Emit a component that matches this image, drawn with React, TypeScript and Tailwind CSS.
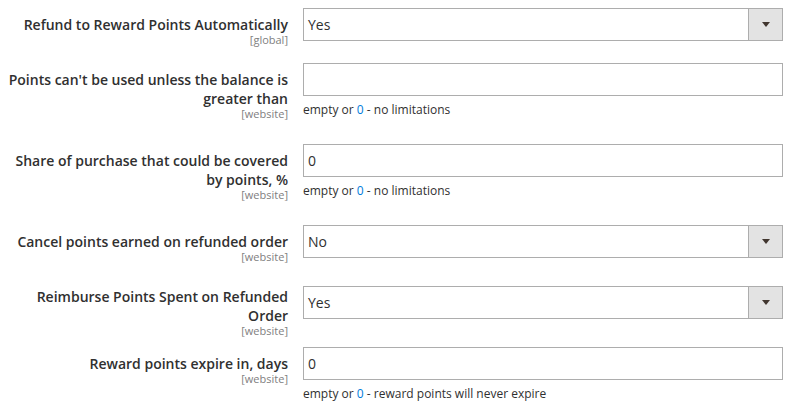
const rows = [
  {
    label: ["Refund to Reward Points Automatically"],
    scope: "[global]",
    type: "select",
    value: "Yes",
    h: "h-[55px]",
    pt: "pt-[7px]",
  },
  {
    label: ["Points can't be used unless the balance is", "greater than"],
    scope: "[website]",
    type: "input",
    value: "",
    note: "no limitations",
    h: "h-[81px]",
    pt: "pt-[7px]",
  },
  {
    label: ["Share of purchase that could be covered", "by points, %"],
    scope: "[website]",
    type: "input",
    value: "0",
    note: "no limitations",
    h: "h-[81px]",
    pt: "pt-[7px]",
  },
  {
    label: ["Cancel points earned on refunded order"],
    scope: "[website]",
    type: "select",
    value: "No",
    h: "h-[61px]",
    pt: "pt-[7px]",
  },
  {
    label: ["Reimburse Points Spent on Refunded", "Order"],
    scope: "[website]",
    type: "select",
    value: "Yes",
    h: "h-[61px]",
    pt: "pt-[1px]",
  },
  {
    label: ["Reward points expire in, days"],
    scope: "[website]",
    type: "input",
    value: "0",
    note: "reward points will never expire",
    h: "h-[62px]",
    pt: "pt-[7px]",
  },
];

const App = () => {
  return (
    <div
      className="w-[793px] h-[409px] bg-white pt-[8px] overflow-hidden text-[#303030]"
      style={{ fontFamily: '"Open Sans", "Noto Sans", sans-serif' }}
    >
      {rows.map((r, i) => (
        <div key={i} className={`flex items-start ${r.h}`}>
          <div className={`w-[288px] text-right ${r.pt}`}>
            <div className="text-[14px] leading-[19px] font-semibold">
              {r.label.map((l, j) => (
                <div key={j}>{l}</div>
              ))}
            </div>
            <div className="text-[11px] leading-[12px] text-[#808080]">
              {r.scope}
            </div>
          </div>
          <div className="ml-[15px] w-[480px]">
            {r.type === "select" ? (
              <div className="flex h-[33px] border border-[#adadad] bg-white">
                <div className="flex-1 flex items-center pl-[4px] text-[14px]">
                  {r.value}
                </div>
                <div className="w-[34px] border-l border-[#adadad] bg-[#e3e3e3] flex items-center justify-center">
                  <svg width="8" height="5" viewBox="0 0 8 5">
                    <path d="M0 0 H8 L4 5 Z" fill="#41362f" />
                  </svg>
                </div>
              </div>
            ) : (
              <div className="flex items-center h-[33px] border border-[#adadad] bg-white pl-[4px] text-[14px]">
                {r.value}
              </div>
            )}
            {r.note && (
              <div className="mt-[6px] text-[12px] leading-[16px]">
                empty or <span className="text-[#007bdb]">0</span> - {r.note}
              </div>
            )}
          </div>
        </div>
      ))}
    </div>
  );
};

export default App;
